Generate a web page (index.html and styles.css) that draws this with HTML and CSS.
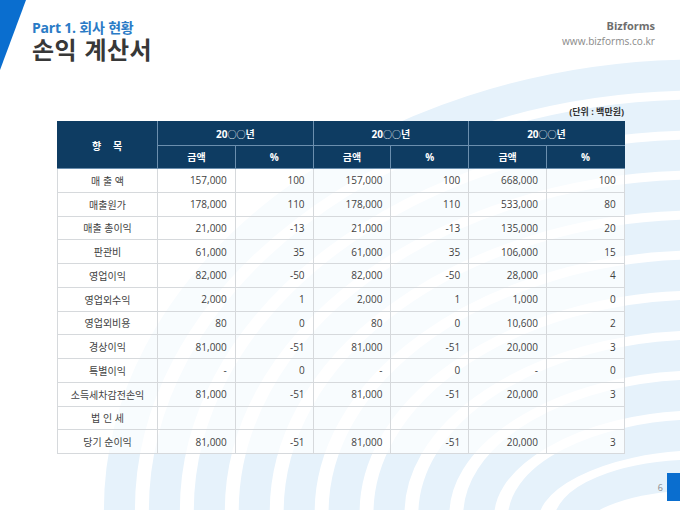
FILE: index.html
```html
<!DOCTYPE html>
<html lang="ko">
<head>
<meta charset="utf-8">
<title>손익 계산서</title>
<link rel="stylesheet" href="styles.css">
</head>
<body>
<div class="slide">
  <svg class="bg" viewBox="0 0 680 510" width="680" height="510" aria-hidden="true">
    <g fill="none" stroke="#e6f2fb" stroke-width="31" stroke-linecap="butt">
      <path d="M120 530 C105 279 380 75 700 75"/>
      <path d="M165 530 C150 301 405 115 700 115"/>
      <path d="M210 530 C195 323 430 155 700 155"/>
      <path d="M255 530 C240 345 454 195 700 195"/>
      <path d="M300 530 C285 367 479 235 700 235"/>
      <path d="M345 530 C330 389 504 275 700 275"/>
      <path d="M390 530 C375 411 529 315 700 315"/>
      <path d="M435 530 C420 433 554 355 700 355"/>
      <path d="M480 530 C465 455 579 395 700 395"/>
      <path d="M525 530 C510 478 603 435 700 435"/>
      <path d="M570 530 C560 500 625 475 700 475"/>
    </g>
    <polygon points="0,0 26,0 0,70" fill="#0a6ecf"/>
  </svg>

  <header class="top">
    <div class="titles">
      <div class="part">Part 1. 회사 현황</div>
      <h1 class="title">손익 계산서</h1>
    </div>
    <div class="brand">
      <div class="brand-name">Bizforms</div>
      <div class="brand-url">www.bizforms.co.kr</div>
    </div>
  </header>

  <div class="unit">(단위 : 백만원)</div>

  <table class="pl">
    <colgroup>
      <col class="c-item">
      <col class="c-num"><col class="c-num">
      <col class="c-num"><col class="c-num">
      <col class="c-num"><col class="c-num">
    </colgroup>
    <thead>
      <tr>
        <th rowspan="2" class="h-item">향 &nbsp;&nbsp;목</th>
        <th colspan="2">20<span class="circ">○○</span>년</th>
        <th colspan="2">20<span class="circ">○○</span>년</th>
        <th colspan="2">20<span class="circ">○○</span>년</th>
      </tr>
      <tr>
        <th>금액</th><th>%</th>
        <th>금액</th><th>%</th>
        <th>금액</th><th>%</th>
      </tr>
    </thead>
    <tbody>
      <tr><td class="item">매 출 액</td><td>157,000</td><td>100</td><td>157,000</td><td>100</td><td>668,000</td><td>100</td></tr>
      <tr><td class="item">매출원가</td><td>178,000</td><td>110</td><td>178,000</td><td>110</td><td>533,000</td><td>80</td></tr>
      <tr><td class="item">매출 총이익</td><td>21,000</td><td>-13</td><td>21,000</td><td>-13</td><td>135,000</td><td>20</td></tr>
      <tr><td class="item">판관비</td><td>61,000</td><td>35</td><td>61,000</td><td>35</td><td>106,000</td><td>15</td></tr>
      <tr><td class="item">영업이익</td><td>82,000</td><td>-50</td><td>82,000</td><td>-50</td><td>28,000</td><td>4</td></tr>
      <tr><td class="item">영업외수익</td><td>2,000</td><td>1</td><td>2,000</td><td>1</td><td>1,000</td><td>0</td></tr>
      <tr><td class="item">영업외비용</td><td>80</td><td>0</td><td>80</td><td>0</td><td>10,600</td><td>2</td></tr>
      <tr><td class="item">경상이익</td><td>81,000</td><td>-51</td><td>81,000</td><td>-51</td><td>20,000</td><td>3</td></tr>
      <tr><td class="item">특별이익</td><td>-</td><td>0</td><td>-</td><td>0</td><td>-</td><td>0</td></tr>
      <tr><td class="item">소득세차감전손익</td><td>81,000</td><td>-51</td><td>81,000</td><td>-51</td><td>20,000</td><td>3</td></tr>
      <tr><td class="item">법 인 세</td><td></td><td></td><td></td><td></td><td></td><td></td></tr>
      <tr><td class="item">당기 순이익</td><td>81,000</td><td>-51</td><td>81,000</td><td>-51</td><td>20,000</td><td>3</td></tr>
    </tbody>
  </table>

  <footer class="foot">
    <span class="page-no">6</span>
    <span class="page-mark"></span>
  </footer>
</div>
</body>
</html>
```

FILE: styles.css
```css
html, body {
  margin: 0;
  padding: 0;
  background: #ffffff;
}

body {
  font-family: "Open Sans", "Noto Sans CJK KR", sans-serif;
  color: #404040;
}

.slide {
  position: relative;
  width: 680px;
  height: 510px;
  overflow: hidden;
  background: #ffffff;
}

.bg {
  position: absolute;
  left: 0;
  top: 0;
  z-index: 0;
}

.top, .unit, .pl, .foot {
  position: relative;
  z-index: 1;
}

.top {
  height: 66px;
  display: flex;
  justify-content: space-between;
  align-items: flex-start;
  padding: 19px 25px 0 32px;
  box-sizing: border-box;
}

.part {
  font-size: 14px;
  line-height: 17px;
  font-weight: 700;
  color: #2a7bc6;
  letter-spacing: -0.2px;
}

.title {
  margin: -1px 0 0;
  font-size: 24px;
  line-height: 28px;
  font-weight: 700;
  color: #383838;
  font-family: "Noto Sans CJK KR", sans-serif;
  letter-spacing: 0.5px;
}

.brand {
  text-align: right;
  padding-top: 0;
}

.brand-name {
  font-size: 11px;
  line-height: 14px;
  font-weight: 700;
  color: #6e6e6e;
}

.brand-url {
  margin-top: 1px;
  font-size: 10.1px;
  line-height: 14px;
  color: #8a8a8a;
}

.unit {
  margin: 40px 56px 0 0;
  text-align: right;
  font-size: 9px;
  line-height: 12px;
  font-weight: 700;
  color: #333333;
}

.pl {
  margin: 3px 0 0 57px;
  width: 567px;
  border-collapse: collapse;
  table-layout: fixed;
  font-size: 10px;
}

.c-item { width: 100px; }
.c-num { width: 77.8px; }

.pl th {
  background: #0e3c62;
  color: #ffffff;
  font-weight: 700;
  font-size: 10px;
  height: 23.5px;
  padding: 0;
  border: 1px solid #6b8fae;
  text-align: center;
  box-sizing: border-box;
}

.pl th .circ {
  font-family: "Noto Sans CJK KR", sans-serif;
  font-size: 9px;
  font-weight: 400;
}

.pl thead tr:first-child th {
  border-top-color: #0e3c62;
}

.pl th.h-item {
  border-left-color: #0e3c62;
  letter-spacing: 1px;
}

.pl thead tr th:last-child {
  border-right-color: #0e3c62;
}

.pl td {
  height: 23.75px;
  padding: 0 8px 0 4px;
  box-sizing: border-box;
  border: 1px solid #d6d9dc;
  background: rgba(255, 255, 255, 0.72);
  text-align: right;
  color: #424242;
  white-space: nowrap;
}

.pl td.item {
  text-align: center;
  padding: 0 2px;
}

.foot {
  margin-top: 19px;
  height: 28px;
  display: flex;
  justify-content: flex-end;
  align-items: center;
  gap: 4px;
}

.page-no {
  font-size: 9px;
  color: #8a8a8a;
}

.page-mark {
  width: 13px;
  height: 28px;
  background: #0a6ecf;
}
```
